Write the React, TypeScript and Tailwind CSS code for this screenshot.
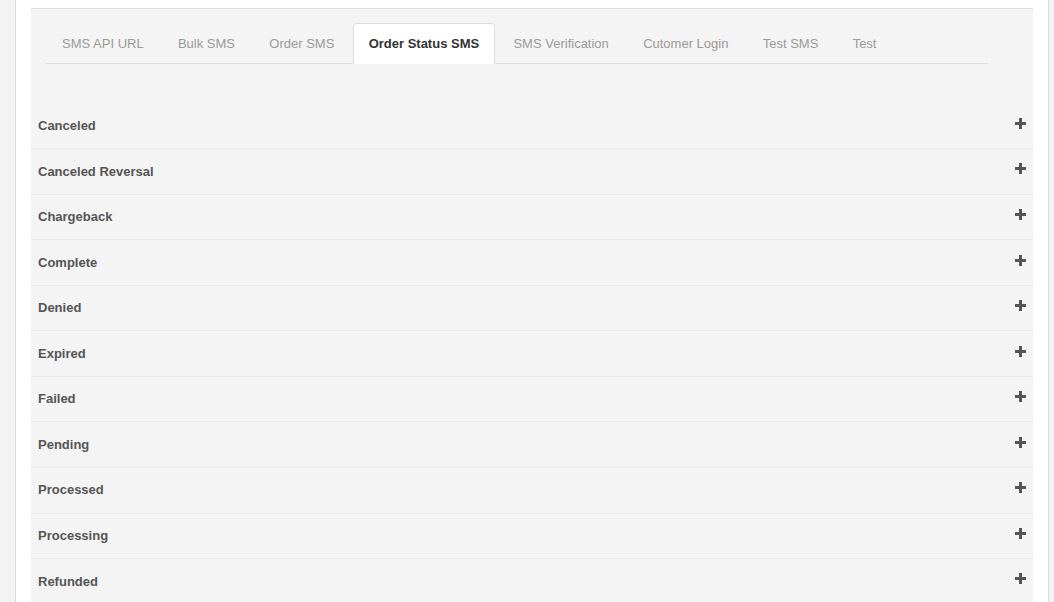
const tabs = [
  'SMS API URL',
  'Bulk SMS',
  'Order SMS',
  'Order Status SMS',
  'SMS Verification',
  'Cutomer Login',
  'Test SMS',
  'Test',
];

const statuses = [
  'Canceled',
  'Canceled Reversal',
  'Chargeback',
  'Complete',
  'Denied',
  'Expired',
  'Failed',
  'Pending',
  'Processed',
  'Processing',
  'Refunded',
];

function PlusIcon() {
  return (
    <svg width="11" height="11" viewBox="0 0 11 11" className="block">
      <rect x="4" y="0" width="3" height="11" fill="#555" />
      <rect x="0" y="4" width="11" height="3" fill="#555" />
    </svg>
  );
}

export default function App() {
  const active = 'Order Status SMS';

  return (
    <div className="h-[602px] overflow-hidden bg-[#f3f3f3] font-['Liberation_Sans',Arial,sans-serif] text-[13px]">
      <div className="ml-[15px] h-full w-[1034px] border-x border-[#dcdcdc] bg-white px-[15px] pt-[8px]">
        <div className="h-full border-t border-[#dedede] bg-[#f4f4f4]">
          <div className="px-[15px] pt-[14px]">
            <ul className="flex w-[942px] border-b border-[#dddddd]">
              {tabs.map((tab) => (
                <li key={tab} className="-mb-px mr-[2.3px]">
                  {tab === active ? (
                    <span className="block rounded-t-[4px] border border-[#dddddd] border-b-transparent bg-white px-[15px] pb-[9px] pt-[11px] leading-[18.6px] font-bold text-[#333]">
                      {tab}
                    </span>
                  ) : (
                    <span className="block border border-transparent px-[15px] pb-[9px] pt-[11px] leading-[18.6px] text-[#9a9a9a]">
                      {tab}
                    </span>
                  )}
                </li>
              ))}
            </ul>
          </div>
          <div className="mt-[40px]">
            {statuses.map((status) => (
              <div
                key={status}
                className="flex h-[45.56px] items-center justify-between border-b border-[#ebebeb] pl-[7px] pr-[7px]"
              >
                <span className="font-bold text-[#555]">{status}</span>
                <span className="mb-[5px]">
                  <PlusIcon />
                </span>
              </div>
            ))}
          </div>
        </div>
      </div>
    </div>
  );
}
